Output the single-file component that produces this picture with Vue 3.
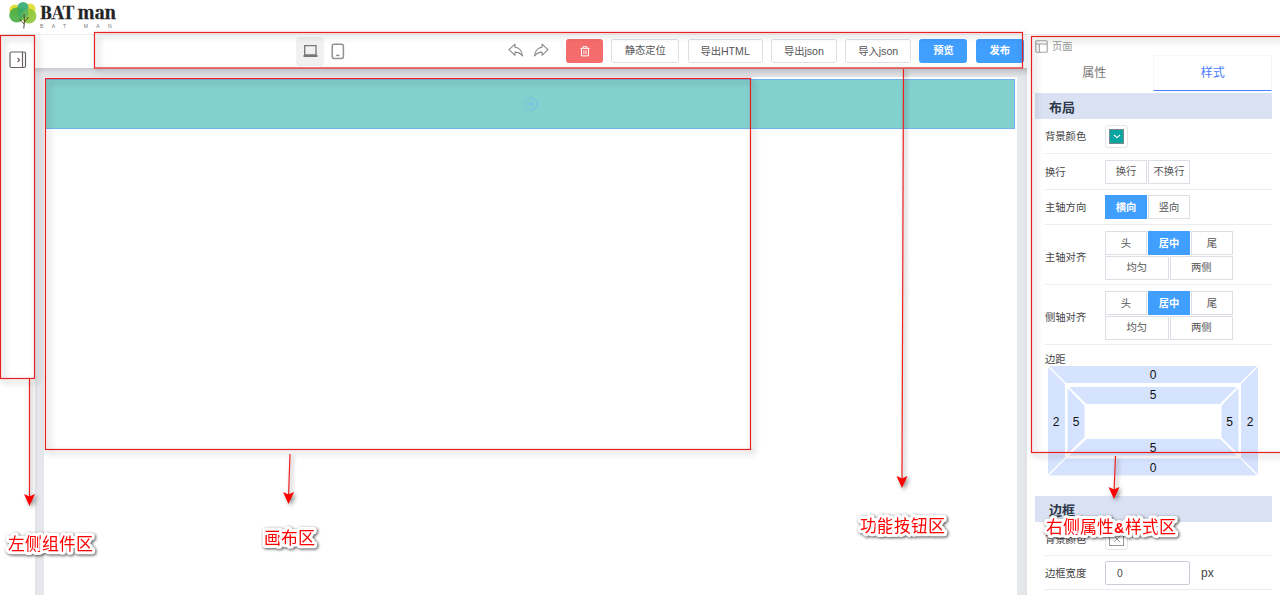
<script setup>
const actions = [
  { label: '静态定位', w: 68 },
  { label: '导出', latin: 'HTML', w: 75 },
  { label: '导出', latin: 'json', w: 66 },
  { label: '导入', latin: 'json', w: 66 },
  { label: '预览', w: 48, primary: true },
  { label: '发布', w: 48, primary: true },
]
const rows = [
  { label: '换行', h: 36, lines: [['换行', '不换行']] },
  { label: '主轴方向', h: 35, lines: [['横向', '竖向']], active: '横向' },
  { label: '主轴对齐', h: 60, lines: [['头', '居中', '尾'], ['均匀', '两侧']], active: '居中' },
  { label: '侧轴对齐', h: 60, lines: [['头', '居中', '尾'], ['均匀', '两侧']], active: '居中' },
]
const frames = [
  { x: 0.5, y: 35.5, w: 34, h: 343 },
  { x: 94.5, y: 32.5, w: 928, h: 35.5 },
  { x: 45.5, y: 78.5, w: 705, h: 371 },
  { x: 1031.5, y: 36.5, w: 255, h: 416 },
]
const arrows = [
  { x1: 29.5, y1: 379, x2: 29.5, y2: 500, tip: 506 },
  { x1: 290, y1: 454, x2: 288.5, y2: 498, tip: 504 },
  { x1: 903.5, y1: 69, x2: 902, y2: 482, tip: 488 },
  { x1: 1115.5, y1: 456, x2: 1114, y2: 493, tip: 499 },
]
const notes = [
  { x: 8, y: 550, len: 85, text: '左侧组件区' },
  { x: 264, y: 543.5, len: 51, text: '画布区' },
  { x: 860, y: 532, len: 85, text: '功能按钮区' },
  { x: 1046, y: 533, len: 130, text: '右侧属性', amp: '&', rest: '样式区' },
]
</script>

<template>
  <div class="page">
    <header class="brand">
      <svg class="tree" width="28" height="29" viewBox="0 0 28 29">
        <circle cx="6" cy="9" r="5.5" fill="#e2df38" />
        <circle cx="21" cy="8" r="5.5" fill="#e4e044" />
        <circle cx="14" cy="6.500" r="5.500" fill="#45b27f" />
        <circle cx="7.800" cy="14" r="7.6" fill="#4caf45" fill-opacity=".92" />
        <circle cx="20" cy="15" r="7.4" fill="#91c83c" fill-opacity=".92" />
        <circle cx="14" cy="12" r="5.500" fill="#2ea77a" fill-opacity=".5" />
        <path d="M14.8 27.500Q16 20 15 13M15.200 23Q12 20 10.500 18M15.400 21Q18 19 19.500 16" fill="none" stroke="#46391f" stroke-width=".9" />
      </svg>
      <div class="name">
        <b>BAT man</b>
        <small>BAT MAN</small>
      </div>
    </header>
    <div class="body">
      <aside class="left">
        <svg width="18" height="18" viewBox="0 0 18 18" fill="none" stroke="#6b6064" stroke-width="1.2">
          <rect x="1" y="1" width="15.5" height="15.5" rx="1.5" />
          <path d="M13.5 1V16.5M8.6 6.8L10.5 9L8.6 11.2" />
        </svg>
      </aside>
      <main class="center">
        <div class="toolbar">
          <div class="devices">
            <span class="device on">
              <svg width="16" height="16" viewBox="0 0 16 16" fill="none" stroke="#777">
                <path d="M2.7 2.7H14V11.8H2.7Z" stroke-width="1.3" />
                <path d="M1.500 13H15.500" stroke-width="2" />
              </svg>
            </span>
            <span class="device">
              <svg width="14" height="17" viewBox="0 0 14 17" fill="none" stroke="#929292" stroke-width="1.5">
                <rect x="1.2" y="1.2" width="11.2" height="14.2" rx="1.8" />
                <path d="M5.2 12.4H8.4" />
              </svg>
            </span>
          </div>
          <div class="history">
            <svg width="16" height="15" viewBox="0 0 16 15"><path d="M1 6.7L7 1.2V4.3Q13.5 5 14.5 12.9Q11.5 9.2 7 9.1V12.3Z" /></svg>
            <svg width="16" height="15" viewBox="0 0 16 15"><path d="M15 6.7L9 1.2V4.3Q2.5 5 1.5 12.9Q4.5 9.2 9 9.1V12.3Z" /></svg>
          </div>
          <div class="actions">
            <button class="btn danger">
              <svg width="10" height="11" viewBox="0 0 10 11" fill="none" stroke="#fff">
                <path d="M0.3 2.4H9.7M3 2V.7H7V2M1.5 2.5V9.9H8.5V2.5M3.9 4.3V8.2M6.1 4.3V8.2" />
              </svg>
            </button>
            <button v-for="a in actions" :key="a.label + a.latin" class="btn" :class="{ primary: a.primary }" :style="{ width: a.w + 'px' }"><span>{{ a.label }}<span v-if="a.latin" class="latin">{{ a.latin }}</span></span></button>
          </div>
        </div>
        <div class="stage">
          <div class="canvas">
            <div class="block">
              <svg width="14" height="14" viewBox="0 0 14 14" fill="none" stroke="#74c2e2">
                <circle cx="7" cy="7" r="6" /><path d="M7 4.5V9.5M4.5 7H9.5" stroke-width="1.6" />
              </svg>
            </div>
          </div>
        </div>
      </main>
      <aside class="right">
        <div class="crumb">
          <svg width="13" height="13" viewBox="0 0 13 13" fill="none" stroke="#a2a2a2" stroke-width="1.1">
            <rect x=".8" y=".8" width="11.4" height="11.4" rx="1" /><path d="M.8 4H12.2M4.3 4V12.2" />
          </svg>
          <span>页面</span>
        </div>
        <div class="tabs"><span>属性</span><span class="on">样式</span></div>
        <h3>布局</h3>
        <div class="row first">
          <label>背景颜色</label>
          <span class="picker">
            <i class="swatch"><svg width="8" height="5" viewBox="0 0 8 5"><path d="M1 1L4 3.6L7 1" fill="none" stroke="#fff" stroke-width="1.1" /></svg></i>
          </span>
        </div>
        <div v-for="r in rows" :key="r.label" class="row" :class="{ tall: r.lines.length > 1 }" :style="{ height: r.h + 'px' }">
          <label>{{ r.label }}</label>
          <div class="options">
            <div v-for="(line, i) in r.lines" :key="i" class="line" :class="{ wide: i === 1 }">
              <span v-for="o in line" :key="o" class="opt" :class="{ on: o === r.active }">{{ o }}</span>
            </div>
          </div>
        </div>
        <div class="spacing">
          <label>边距</label>
          <svg width="210" height="110" viewBox="0 0 210 110">
            <g fill="#d6e3ff">
              <path d="M1 0H209L192 17H18ZM1 109.5H209L192 92.500H18ZM0 1L17 18V91.500L0 108.500ZM210 1L193 18V91.500L210 108.500Z" />
              <path d="M21 21H189L172 38H38.500ZM21 89.500H189L172 73H38.500ZM19.500 22L36.500 39.500V71.500L19.500 88ZM190.500 22L173.500 39.500V71.500L190.500 88Z" />
            </g>
            <g class="nums">
              <text x="105" y="12.500">0</text><text x="105" y="33">5</text>
              <text x="105" y="85.500">5</text><text x="105" y="105.500">0</text>
              <text x="8" y="59.500">2</text><text x="28" y="59.500">5</text>
              <text x="181.500" y="59.500">5</text><text x="202" y="59.500">2</text>
            </g>
          </svg>
        </div>
        <h3>边框</h3>
        <div class="row">
          <label>背景颜色</label>
          <span class="picker"><i class="swatch empty"><svg width="8" height="8" viewBox="0 0 8 8"><path d="M1 1L7 7M7 1L1 7" stroke="#999" /></svg></i></span>
        </div>
        <div class="row">
          <label>边框宽度</label>
          <span class="field">0</span><span class="unit">px</span>
        </div>
      </aside>
    </div>

    <svg class="marks" width="1280" height="595" viewBox="0 0 1280 595">
      <g class="frames">
        <rect v-for="f in frames" :key="f.x" :x="f.x" :y="f.y" :width="f.w" :height="f.h" />
      </g>
      <g v-for="a in arrows" :key="a.x1" class="arrow">
        <path :d="`M${a.x1} ${a.y1}L${a.x2} ${a.y2}`" />
        <path class="head" :d="`M${a.x2} ${a.tip}l-5.500-12l5.500 2.500l5.500-2.500z`" />
      </g>
      <g class="notes">
        <text v-for="n in notes" :key="n.text" :x="n.x" :y="n.y" :textLength="n.len">{{ n.text }}<tspan v-if="n.amp" class="amp">{{ n.amp }}</tspan>{{ n.rest }}</text>
      </g>
    </svg>
  </div>
</template>

<style>
body { margin: 0; overflow: hidden; }
</style>

<style scoped>
* { box-sizing: border-box; }
.page { position: relative; width: 1280px; height: 595px; overflow: hidden; background: #fff; color: #444; font: 10.3px/1.2 "Liberation Sans", "Noto Sans CJK SC", sans-serif; display: flex; flex-direction: column; }
svg { display: block; flex: none; }
.brand { height: 35px; flex: none; border-bottom: 1px solid #eceff3; display: flex; align-items: flex-start; padding: 1px 0 0 9px; }
.name { margin-left: 3px; display: flex; flex-direction: column; }
.name b { font: bold 17.5px/21px "Noto Serif Display", "Liberation Serif", serif; color: #222; white-space: nowrap; letter-spacing: -.35px; margin-top: 1px; -webkit-text-stroke: .4px #222; }
.name small { font-size: 5px; line-height: 6px; letter-spacing: 8.3px; color: #777; white-space: nowrap; }
.body { flex: 1; display: flex; min-height: 0; }
.left { width: 35px; flex: none; padding: 16px 0 0 9px; }
.center { width: 992px; flex: none; display: flex; flex-direction: column; }
.toolbar { height: 33px; flex: none; display: flex; align-items: center; padding-bottom: 1px; }
.devices { display: flex; margin-left: 261px; width: 212px; }
.device { width: 28px; height: 29px; border-radius: 4px; display: flex; align-items: center; justify-content: center; }
.device.on { background: #f1f1f1; }
.history { display: flex; gap: 9px; width: 58px; margin-top: -2px; }
.history path { fill: none; stroke: #888; stroke-width: 1.1; stroke-linejoin: round; }
.actions { display: flex; gap: 8.300px; }
.btn { height: 24px; flex: none; border: 1px solid #dcdfe6; border-radius: 2.500px; background: #fff; color: #555; font: inherit; padding: 1px 0 0; white-space: nowrap; display: flex; align-items: center; justify-content: center; }
.latin { font-size: 10.6px; }
.btn.danger { width: 37px; background: #f56c6c; border-color: #f56c6c; padding: 0; }
.btn.primary { background: #409eff; border-color: #409eff; color: #fff; font-weight: bold; }
.stage { flex: 1; background: #e5e7eb; padding: 9px 10px 0 9px; box-shadow: inset 0 5px 7px -4px #b5b7bb; }
.canvas { background: #fff; height: 100%; padding: 2px 2px 0 1px; }
.block { height: 50px; border: 1px solid #72b2ec; background: #83d1ce; display: flex; align-items: center; justify-content: center; padding-left: 1px; }
.right { width: 253px; flex: none; padding: 4px 8px 0; }
.crumb { height: 16px; display: flex; align-items: center; gap: 4px; color: #999; }
.crumb svg { margin-top: -1px; }
.tabs { height: 36px; display: flex; font-size: 12px; color: #777; }
.tabs span { flex: 1; display: flex; align-items: center; justify-content: center; padding-left: 1px; }
.tabs .on { color: #4a7dff; border: 1px solid #f6f6f6; border-bottom: 1px solid #4a7dff; }
h3 { margin: 2px 0 0; height: 26px; padding: 3px 0 0 14px; background: #d9e1f2; color: #2c3748; font-size: 13px; line-height: 24px; font-weight: bold; }
.row { margin-left: 10px; height: 34px; border-bottom: 1px solid #ebecef; display: flex; align-items: center; }
.row label { width: 60px; flex: none; padding-top: 3px; }
.row.tall label { padding-top: 7px; }
.row.first { height: 35px; }
.row.first label { padding-top: 2px; }
.picker { width: 23px; height: 23px; border: 1px solid #e6e6e6; border-radius: 3px; display: flex; align-items: center; justify-content: center; }
.swatch { width: 15px; height: 15px; background: #0aa5a0; border: 1px solid #7a8a8a; display: flex; align-items: center; justify-content: center; }
.swatch.empty { background: #fff; border-color: #999; }
.options { display: flex; flex-direction: column; gap: 1px; }
.tall .options { padding-top: 2px; }
.line { display: flex; gap: 1px; width: 128px; }
.opt { width: 42px; height: 24px; border: 1px solid #dcdfe6; display: flex; align-items: center; justify-content: center; color: #555; padding-top: 2px; }
.wide .opt { width: 64px; padding-top: 1px; }
.opt.on { background: #409eff; border-color: #409eff; color: #fff; font-weight: bold; }
.spacing { height: 149px; padding: 9px 0 0 10px; }
.spacing label { display: block; height: 12px; }
.spacing svg { margin-left: 3px; }
.nums text { font: 12px "Liberation Sans", sans-serif; fill: #111; text-anchor: middle; }
.field { width: 85px; height: 24px; border: 1px solid #c8cdda; border-radius: 2px; padding-left: 11px; line-height: 24px; margin-top: 1px; }
.unit { margin-left: 11px; margin-top: 2px; font-size: 12px; }
.marks { position: absolute; left: 0; top: 0; pointer-events: none; }
.frames { fill: none; stroke: #e82020; stroke-width: 1.2; filter: drop-shadow(3px 3px 3px rgba(0, 0, 0, .4)); }
.arrow { filter: drop-shadow(2px 2px 2px rgba(0, 0, 0, .45)); }
.arrow path { fill: none; stroke: #f02020; stroke-width: 1.2; }
.arrow .head { fill: #f00; stroke: none; }
.notes { filter: drop-shadow(1.500px 1.500px 1.500px rgba(0, 0, 0, .7)); }
.notes text { font: 400 17px "Liberation Sans", "Noto Sans CJK SC", sans-serif; fill: #f00; stroke: #fff; stroke-width: 6px; stroke-linejoin: round; paint-order: stroke; }
.notes .amp { font-weight: bold; font-size: 15px; }
</style>
